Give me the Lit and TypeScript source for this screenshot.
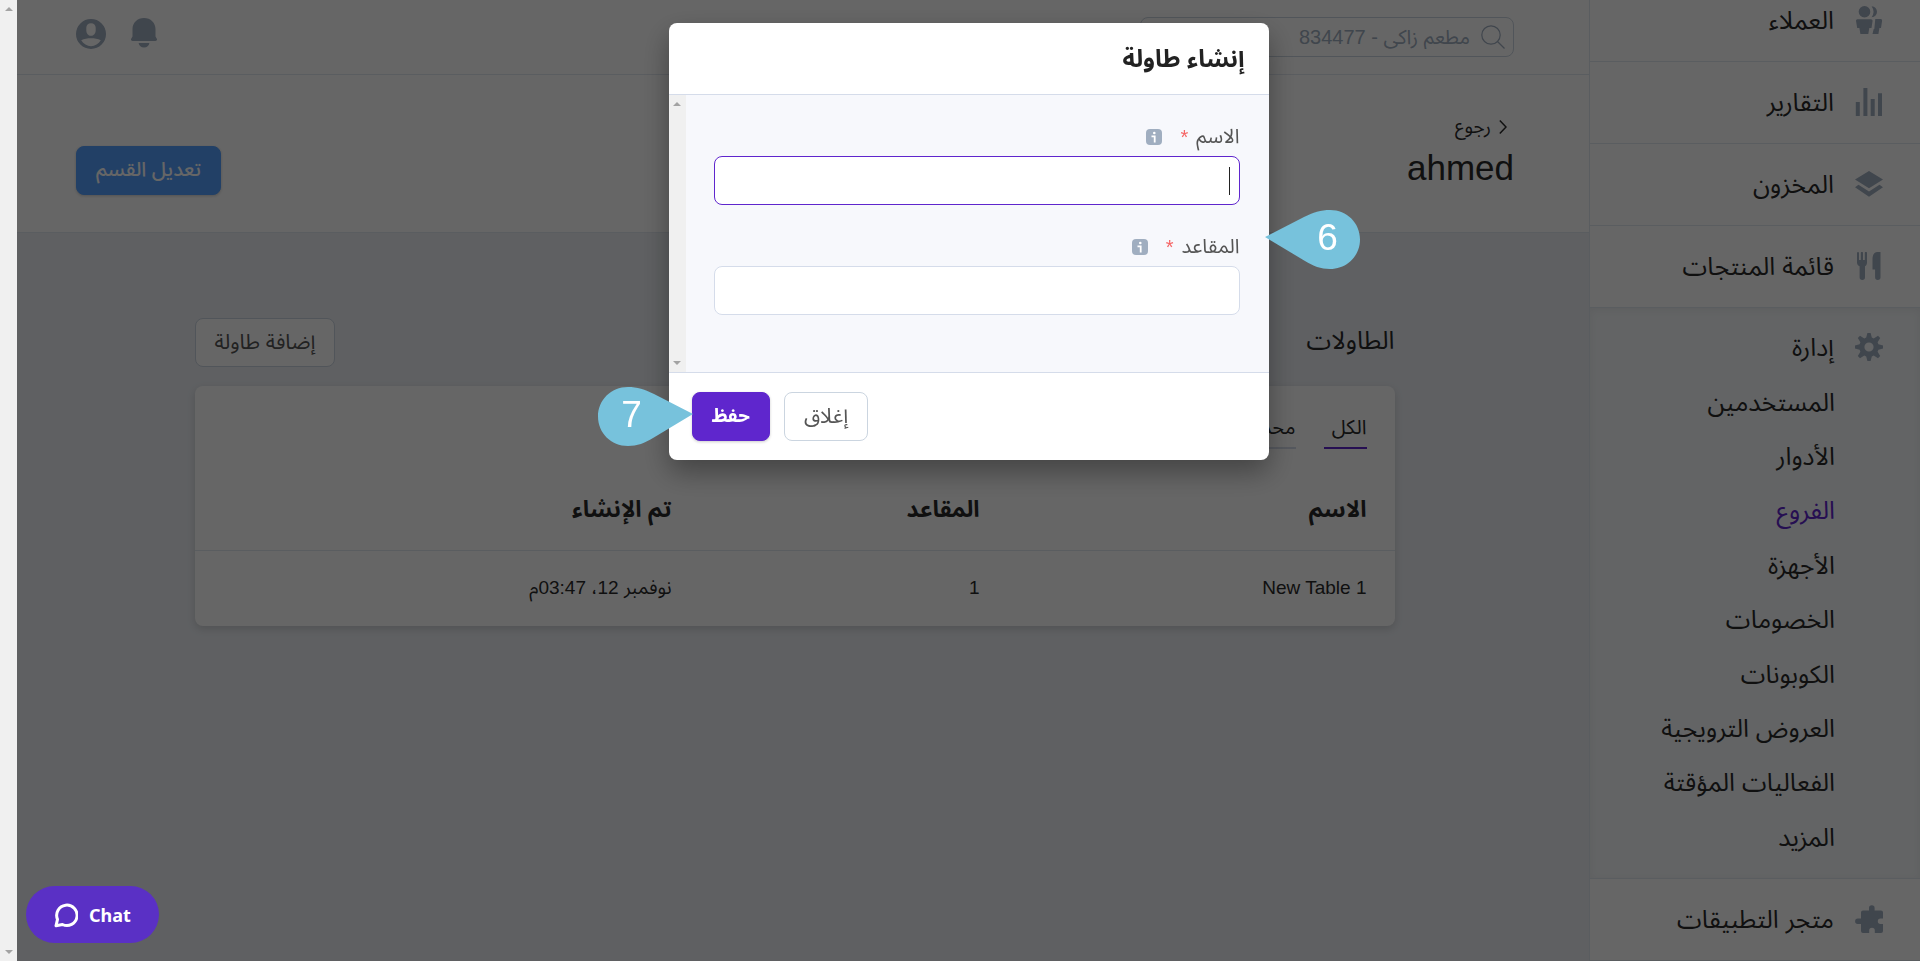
import { LitElement, html, svg, css } from "lit";
import { customElement, property, state } from "lit/decorators.js";
import { classMap } from "lit/directives/class-map.js";

const icons = {
  users: svg`<svg viewBox="0 0 28 28" width="28" height="28" aria-hidden="true" fill="currentColor">
    <ellipse cx="9.5" cy="5.7" rx="5.8" ry="5.7"/>
    <path d="M2.600 13.200H16a1.600 1.600 0 0 1 1.600 1.500L16.500 22h-2.200l-1 6H5.400l-1-6H2.200L1 14.800a1.500 1.500 0 0 1 1.600-1.600z"/>
    <path d="M16.600.2c3.400.4 5.400 2.500 5.400 5.500s-2 5.100-5.400 5.500a9.500 9.500 0 0 0 0-11zM20.300 13h5.200a1.500 1.500 0 0 1 1.600 1.700L26 22h-1.600l-1 6H17.500l1.200-5h.6z"/>
  </svg>`,
  chart: svg`<svg viewBox="0 0 28 28" width="28" height="28" aria-hidden="true" fill="currentColor">
    <path d="M.8 14h4v14h-4zM8.400 0h4v28h-4zM15.700 11h4v17h-4zM23 5.300h4V28h-4z"/>
  </svg>`,
  layers: svg`<svg viewBox="0 0 28 28" width="28" height="28" aria-hidden="true" fill="currentColor">
    <path d="M14 1l14 8.600-14 8.700L0 9.600z"/><path d="M3.500 14.800L14 21.400l10.500-6.600L28 17.200 14 26.800 0 17.200z"/>
  </svg>`,
  cutlery: svg`<svg viewBox="0 0 28 28" width="28" height="28" aria-hidden="true" fill="currentColor">
    <path d="M2 1a1 1 0 0 1 2 0v7h1.800V1a1 1 0 0 1 2.200 0v7h1.800V1a1 1 0 0 1 2.200 0v9.500c0 2-1 3.200-2 3.800v11a2.700 2.700 0 0 1-5.400 0v-11C3.200 13.600 2 12.500 2 10.500z"/>
    <path d="M25.500 0v25.300a2.700 2.700 0 0 1-5.400 0V17.500h-2.600V7c0-4.500 2-7 5-7z"/>
  </svg>`,
  gear: svg`<svg viewBox="-14 -14 28 28" width="28" height="28" aria-hidden="true" fill="currentColor">
    <path fill-rule="evenodd" d="M-1.600-14h3.200l1.200 4.600 1.900.8 4.300-2.600 2.200 2.200-2.600 4.300.8 1.900 4.600 1.200v3.200L9.400 2.800l-.8 1.900 2.600 4.300L9 11.200 4.700 8.600l-1.900.8L1.600 14h-3.200l-1.200-4.600-1.900-.8L-9 11.200-11.200 9l2.600-4.300-.8-1.900L-14 1.600v-3.200l4.600-1.200.8-1.900L-11.200-9-9-11.200l4.300 2.600 1.900-.8zM0-4.600a4.600 4.600 0 1 0 0 9.200 4.600 4.600 0 0 0 0-9.200z"/>
  </svg>`,
  puzzle: svg`<svg viewBox="0 0 28 28" width="28" height="28" aria-hidden="true" fill="currentColor">
    <path d="M14 5.500V3a2.800 2.800 0 0 1 5.600 0v2.500H26a2 2 0 0 1 2 2v6h-2.500a2.700 2.700 0 0 0 0 5.400H28V26a2 2 0 0 1-2 2h-6.200v-2.500a2.800 2.800 0 0 0-5.600 0V28H8a2 2 0 0 1-2-2v-7H2.800a2.700 2.700 0 0 1 0-5.400H6v-6a2 2 0 0 1 2-2z"/>
  </svg>`,
  account: svg`<svg viewBox="0 0 30 30" width="30" height="30" aria-hidden="true" fill="currentColor">
    <path fill-rule="evenodd" d="M15 0a15 15 0 1 0 0 30 15 15 0 0 0 0-30zM15 4.200c2.900 0 4.700 1.900 4.700 4.600v2.400c0 3-1.800 5.600-4.700 5.600s-4.700-2.600-4.700-5.600V8.800c0-2.700 1.800-4.600 4.700-4.600zM5.200 21.300c3-1.400 6.200-2 9.800-2s6.800.6 9.800 2C22.500 25 19 27.200 15 27.200S7.500 25 5.200 21.300z"/>
  </svg>`,
  bell: svg`<svg viewBox="0 0 26 31" width="26" height="31" aria-hidden="true" fill="currentColor">
    <path d="M13 0c6.600 0 11.500 4.800 11.500 11v7.500l1.300 2.200c.6 1.300-.1 2.300-1.400 2.300H1.600C.3 23-.4 22 .2 20.700l1.300-2.200V11C1.500 4.800 6.400 0 13 0zM7.600 25h10.800a5.500 5.500 0 0 1-10.800 0z"/>
  </svg>`,
  search: svg`<svg viewBox="0 0 24 24" width="24" height="24" aria-hidden="true" fill="none" stroke="currentColor" stroke-width="1.200">
    <circle cx="10" cy="10" r="9.200"/><path d="M16.500 16.500l7 7"/>
  </svg>`,
  chevron: svg`<svg viewBox="0 0 8 14" width="8" height="14" aria-hidden="true" fill="none" stroke="currentColor" stroke-width="1.500">
    <path d="M.8.600L7 7 .8 13.400"/>
  </svg>`,
  info: svg`<svg viewBox="0 0 16 16" width="16" height="16" aria-hidden="true">
    <rect width="16" height="16" rx="4" fill="#a0aec0"/>
    <circle cx="8.300" cy="4" r="1.300" fill="#fff"/><path d="M5.500 7.400h3.200v6" fill="none" stroke="#fff" stroke-width="1.800"/>
  </svg>`,
  chat: svg`<svg viewBox="0 0 24 26" width="24" height="26" aria-hidden="true" fill="none" stroke="currentColor" stroke-width="3" stroke-linejoin="round">
    <path d="M2 23.800l1.500-6.500a10.200 10.200 0 1 1 5 5.200z"/>
  </svg>`,
};

type IconName = keyof typeof icons;

@customElement("scroll-rail")
class ScrollRail extends LitElement {
  static styles = css`
    :host {
      display: flex;
      flex-direction: column;
      justify-content: space-between;
      align-items: center;
      width: 17px;
      flex: none;
      box-sizing: border-box;
      padding: 7px 0;
      background: #f0f0f0;
    }
    .up,
    .down {
      border: 4px solid transparent;
    }
    .up {
      border-top: 0;
      border-bottom-color: #a3a3a3;
    }
    .down {
      border-bottom: 0;
      border-top-color: #a3a3a3;
    }
  `;
  render() {
    return html`<span class="up"></span><span class="down"></span>`;
  }
}

@customElement("step-pin")
class StepPin extends LitElement {
  @property({ type: Number }) step = 0;
  @property() point: "left" | "right" = "left";

  static styles = css`
    :host {
      display: grid;
      width: 95px;
      height: 59px;
      color: #fff;
      font-size: 37px;
      line-height: 56px;
    }
    svg,
    .label {
      grid-area: 1 / 1;
    }
    .flip {
      transform: scaleX(-1);
    }
    .label {
      z-index: 1;
      text-align: center;
      direction: ltr;
      padding-left: 31px;
    }
    .label.end {
      padding: 0 27px 0 0;
    }
  `;
  render() {
    const right = this.point === "right";
    return html`
      <svg class=${classMap({ flip: right })} viewBox="0 0 95 59" width="95" height="59" aria-hidden="true">
        <path fill="#77c2dc" d="M0 27L39 7C48 2.500 56 0 65 0c17 0 30 13 30 29.500S82 59 65 59c-9 0-17-3-25-8z"/>
      </svg>
      <span class=${classMap({ label: true, end: right })}>${this.step}</span>
    `;
  }
}

@customElement("side-nav")
class SideNav extends LitElement {
  @state() private current = "الفروع";

  private top: [string, IconName][] = [
    ["العملاء", "users"],
    ["التقارير", "chart"],
    ["المخزون", "layers"],
    ["قائمة المنتجات", "cutlery"],
  ];
  private manage = [
    "المستخدمين",
    "الأدوار",
    "الفروع",
    "الأجهزة",
    "الخصومات",
    "الكوبونات",
    "العروض الترويجية",
    "الفعاليات المؤقتة",
    "المزيد",
  ];

  static styles = css`
    :host {
      display: flex;
      flex-direction: column;
      justify-content: flex-end;
      width: 331px;
      flex: none;
      height: 100vh;
      box-sizing: border-box;
      overflow: hidden;
      background: #fff;
      border-left: 1px solid #e2e8f0;
      font-size: 25px;
      line-height: 36px;
      color: #2a2a2a;
    }
    a {
      color: inherit;
      text-decoration: none;
    }
    .item {
      display: flex;
      align-items: center;
      gap: 21px;
      padding-right: 37px;
    }
    .item svg {
      color: #a0aec0;
      flex: none;
    }
    .row {
      box-sizing: border-box;
      height: 82px;
      flex: none;
      padding-bottom: 2px;
      border-bottom: 1px solid #e2e8f0;
    }
    .group {
      flex: none;
      display: grid;
      grid-auto-rows: 1fr;
      height: 571px;
      box-sizing: border-box;
      padding: 12px 0 14px;
      background: #f7fafc;
      box-shadow: inset 0 2px 8px rgba(0, 0, 0, 0.06);
      border-bottom: 1px solid #e2e8f0;
    }
    .sub {
      display: flex;
      align-items: center;
      padding-right: 85px;
    }
    .current {
      color: #5f26cd;
    }
  `;
  render() {
    return html`
      ${this.top.map(([t, i]) => html`<a class="item row" href="#">${icons[i]}<span>${t}</span></a>`)}
      <nav class="group">
        <a class="item" href="#">${icons.gear}<span>إدارة</span></a>
        ${this.manage.map(
          (t) => html`<a class=${classMap({ sub: true, current: t === this.current })} href="#"
            @click=${() => (this.current = t)}>${t}</a>`
        )}
      </nav>
      <a class="item row" href="#">${icons.puzzle}<span>متجر التطبيقات</span></a>
    `;
  }
}

const buttonStyles = css`
  .btn {
    font: inherit;
    font-size: 21px;
    height: 49px;
    padding: 0 19px 2px;
    border-radius: 8px;
    border: 1px solid #cbd5e0;
    background: #fff;
    color: #555;
    cursor: pointer;
  }
  .blue {
    font-size: 20px;
    background: #55a0ff;
    border-color: #55a0ff;
    color: #fff;
    font-weight: 500;
    box-shadow: 0 1px 3px rgba(0, 0, 0, 0.2);
  }
  .purple {
    font-size: 19px;
    background: #5f26cd;
    border-color: #5f26cd;
    color: #fff;
    font-weight: bold;
    box-shadow: 0 1px 3px rgba(0, 0, 0, 0.2);
  }
`;

@customElement("table-dialog")
class TableDialog extends LitElement {
  static styles = [
    buttonStyles,
    css`
      :host {
        display: block;
        width: 600px;
        max-width: 100%;
        border-radius: 8px;
        overflow: hidden;
        background: #fff;
        box-shadow: 0 12px 28px rgba(0, 0, 0, 0.35);
      }
      .title {
        margin: 0;
        padding: 0 24px;
        font-size: 24px;
        line-height: 71px;
        color: #222;
        border-bottom: 1px solid #d5dcea;
      }
      .body {
        display: flex;
        direction: ltr;
        background: #f7f8fc;
        border-bottom: 1px solid #d5dcea;
      }
      .fields {
        direction: rtl;
        flex: 1;
        display: grid;
        gap: 24px;
        padding: 24px 29px 57px 28px;
      }
      .head {
        display: flex;
        align-items: center;
        height: 36px;
        font-size: 20px;
        color: #555;
      }
      .star {
        color: #f56565;
        margin: 0 8px 0 18px;
      }
      .box {
        position: relative;
        margin-top: 1px;
      }
      .input {
        display: block;
        width: 100%;
        height: 49px;
        box-sizing: border-box;
        padding: 0 10px;
        border: 1px solid #d5dcea;
        border-radius: 8px;
        background: #fff;
        font: inherit;
        outline: none;
        caret-color: transparent;
      }
      .active {
        border-color: #5f26cd;
      }
      .caret {
        position: absolute;
        top: 11px;
        right: 10px;
        width: 1px;
        height: 28px;
        background: #222;
      }
      .foot {
        display: flex;
        justify-content: flex-end;
        gap: 14px;
        padding: 19px 23px;
      }
    `,
  ];

  private field(id: string, label: string, active: boolean) {
    return html`<div>
      <div class="head">
        <label for=${id}>${label}</label><span class="star">*</span>${icons.info}
      </div>
      <div class="box">
        <input id=${id} class=${classMap({ input: true, active })} type="text" />
        ${active ? html`<span class="caret"></span>` : null}
      </div>
    </div>`;
  }
  render() {
    return html`
      <h2 class="title">إنشاء طاولة</h2>
      <div class="body">
        <scroll-rail></scroll-rail>
        <div class="fields">${this.field("name", "الاسم", true)}${this.field("seats", "المقاعد", false)}</div>
      </div>
      <div class="foot">
        <button class="btn" type="button">إغلاق</button>
        <button class="btn purple" type="button">حفظ</button>
      </div>
    `;
  }
}

@customElement("app-root")
class AppRoot extends LitElement {
  static styles = [
    buttonStyles,
    css`
      :host {
        display: flex;
        direction: rtl;
        height: 100vh;
        overflow: hidden;
        background: #edf0f5;
        font-family: "Liberation Sans", "Noto Sans Arabic", "Noto Kufi Arabic", "DejaVu Sans", sans-serif;
        font-size: 19px;
        color: #2a2a2a;
      }
      .main {
        flex: 1;
        min-width: 0;
      }
      .bar,
      .pagehead {
        display: flex;
        justify-content: space-between;
        box-sizing: border-box;
        padding: 0 75px 0 76px;
        background: #fff;
        border-bottom: 1px solid #e2e8f0;
      }
      .bar {
        height: 75px;
        padding-top: 17px;
      }
      .search {
        display: flex;
        align-items: center;
        gap: 11px;
        width: 374px;
        height: 40px;
        box-sizing: border-box;
        padding: 0 8px;
        border: 1px solid #cbd5e0;
        border-radius: 8px;
        color: #a0aec0;
      }
      .query {
        flex: 1;
        min-width: 0;
        border: 0;
        outline: 0;
        padding: 0;
        background: none;
        font: inherit;
        font-size: 20px;
        color: inherit;
      }
      .query::placeholder {
        color: inherit;
        opacity: 1;
      }
      .tools {
        display: flex;
        gap: 25px;
        color: #a0aec0;
      }
      .tool {
        height: 36px;
        padding: 0;
        border: 0;
        background: none;
        color: inherit;
      }
      .pagehead {
        align-items: flex-end;
        height: 158px;
        padding-bottom: 37px;
      }
      .back {
        display: flex;
        align-items: center;
        gap: 8px;
        padding-right: 7px;
        line-height: 28px;
        color: inherit;
        text-decoration: none;
      }
      .name {
        margin: 0;
        font-size: 35px;
        line-height: 54px;
        font-weight: normal;
      }
      .content {
        max-width: 1200px;
        margin: 0 auto;
        padding-top: 85px;
      }
      .section {
        display: flex;
        justify-content: space-between;
        align-items: center;
        margin-bottom: 19px;
      }
      .heading {
        margin: 0;
        padding-bottom: 6px;
        font-size: 25px;
        line-height: 36px;
        font-weight: normal;
      }
      .card {
        background: #fff;
        border-radius: 8px;
        box-shadow: 0 3px 8px rgba(0, 0, 0, 0.15);
      }
      .tabs {
        display: flex;
        gap: 28px;
        padding: 19px 28px;
      }
      .tab {
        font: inherit;
        font-size: 20px;
        color: inherit;
        text-align: right;
        background: none;
        border: 0;
        border-bottom: 2px solid #d5dcea;
        min-width: 43px;
        height: 44px;
        padding: 2px 0 0;
      }
      .on {
        border-color: #5f26cd;
      }
      .grid {
        width: 100%;
        table-layout: fixed;
        border-collapse: collapse;
        text-align: right;
      }
      .grid th {
        box-sizing: border-box;
        height: 82px;
        padding: 0 28px;
        font-size: 23px;
        line-height: 34px;
        border-bottom: 1px solid #e2e8f0;
      }
      .grid td {
        height: 75px;
        padding: 0 28px;
      }
      .grid .c1 {
        width: 387px;
      }
      .grid .c2 {
        width: 308px;
      }
      .overlay {
        position: fixed;
        inset: 0;
        display: flex;
        direction: ltr;
        background: rgba(0, 0, 0, 0.6);
      }
      .stage {
        direction: rtl;
        flex: 1;
        display: flex;
        justify-content: center;
        align-items: flex-start;
        padding-top: 23px;
      }
      .holder {
        position: relative;
      }
      .pin {
        position: absolute;
      }
      .pin6 {
        left: 596px;
        top: 187px;
      }
      .pin7 {
        left: -71px;
        top: 364px;
      }
      .chat {
        position: fixed;
        left: 26px;
        bottom: 18px;
        display: flex;
        direction: ltr;
        align-items: center;
        justify-content: center;
        gap: 11px;
        width: 133px;
        height: 57px;
        border: 0;
        border-radius: 29px;
        background: #5a30c5;
        color: #fff;
        font: bold 18px "Noto Sans", sans-serif;
      }
    `,
  ];
  render() {
    return html`
      <side-nav></side-nav>
      <main class="main">
        <header class="bar">
          <label class="search">
            ${icons.search}
            <input class="query" type="search" placeholder="مطعم زاكي - 834477" aria-label="بحث" />
          </label>
          <div class="tools">
            <button class="tool" type="button" aria-label="الإشعارات">${icons.bell}</button>
            <button class="tool" type="button" aria-label="الحساب">${icons.account}</button>
          </div>
        </header>
        <div class="pagehead">
          <div>
            <a class="back" href="#">${icons.chevron}<span>رجوع</span></a>
            <h1 class="name">ahmed</h1>
          </div>
          <button class="btn blue" type="button">تعديل القسم</button>
        </div>
        <div class="content">
          <div class="section">
            <h2 class="heading">الطاولات</h2>
            <button class="btn" type="button">إضافة طاولة</button>
          </div>
          <div class="card">
            <div class="tabs">
              <button class="tab on" type="button">الكل</button>
              <button class="tab" type="button">محدد</button>
            </div>
            <table class="grid">
              <thead>
                <tr><th class="c1">الاسم</th><th class="c2">المقاعد</th><th>تم الإنشاء</th></tr>
              </thead>
              <tbody>
                <tr><td>New Table 1</td><td>1</td><td>نوفمبر 12، 03:47م</td></tr>
              </tbody>
            </table>
          </div>
        </div>
      </main>
      <div class="overlay">
        <scroll-rail></scroll-rail>
        <div class="stage">
          <div class="holder">
            <table-dialog role="dialog"></table-dialog>
            <step-pin class="pin pin6" step="6" point="left"></step-pin>
            <step-pin class="pin pin7" step="7" point="right"></step-pin>
          </div>
        </div>
      </div>
      <button class="chat" type="button">${icons.chat}<span>Chat</span></button>
    `;
  }
}
